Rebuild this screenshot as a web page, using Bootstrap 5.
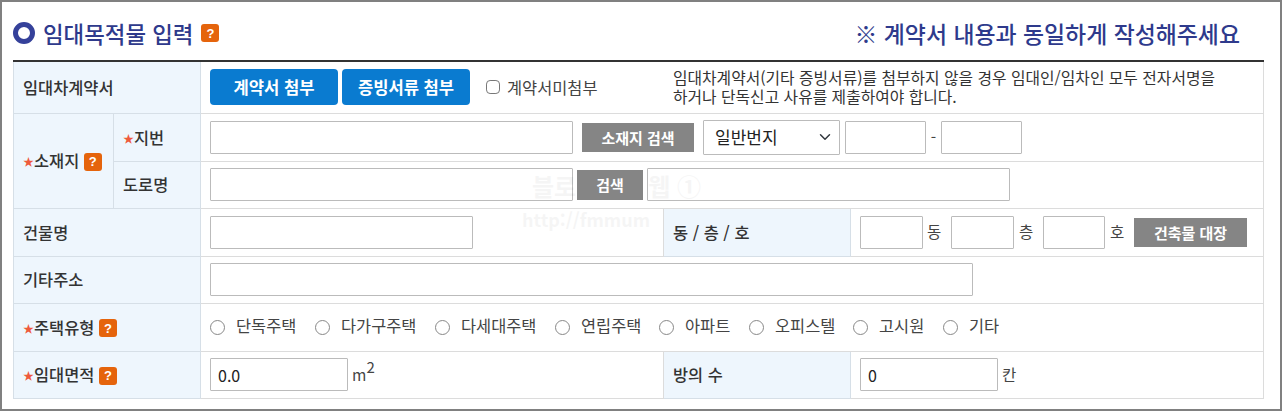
<!DOCTYPE html>
<html lang="ko"><head><meta charset="utf-8"><title>임대목적물 입력</title>
<link href="https://cdn.jsdelivr.net/npm/bootstrap@5.3.0/dist/css/bootstrap.min.css" rel="stylesheet">
<style>
html,body{height:411px;overflow:hidden;background:#fff}
body{font-family:"Noto Sans CJK KR","Noto Sans",sans-serif;font-size:16px;color:#333}
.frame{height:411px;border:2px solid #808080;padding:0 18px 0 11px;position:relative}
.head{height:58px;padding:4px 22px 0 0}
.ring{width:22px;height:22px;border:5px solid #35419a;border-radius:50%;margin-right:8px}
.title-main{font-size:22.4px;color:#2e3a8c;font-weight:500;line-height:30px}
.title-note{font-size:22.9px;color:#2e3a8c;font-weight:500;line-height:30px}
.help{display:inline-flex;align-items:center;justify-content:center;width:18px;height:18px;background:#e5640c;color:#fff;border-radius:3px;font:700 13px "Liberation Sans",sans-serif;vertical-align:1px}
.sheet{table-layout:fixed;width:1250px;margin:0;border-top:2px solid #333;border-collapse:collapse}
.sheet>tbody>tr>*{border:1px solid #dcdcdc;padding:0 9px;vertical-align:middle;box-shadow:none;background:#fff;color:#333;font-size:16px}
.sheet>tbody>tr>th{background:#eef6fd;border-color:#d6dfe7;font-weight:500;font-size:16.4px;color:#333;white-space:nowrap}
.sheet>tbody>tr>td{padding-left:9px}
.r0{height:52px}.r2{height:48px}.r3{height:47px}
.star{color:#ee5a3c;font-size:11px;vertical-align:1px}
.fld{height:33px;border:1px solid #bbb;border-radius:1px;padding:0 7px;font-size:16px;background:#fff;color:#222;outline:0;font-family:inherit;flex:none}
.w363{width:363px}.w263{width:263px}.w81{width:81px}.w63{width:63px}.w763{width:763px}.w138{width:138px}
.pick{width:137px;height:35px;padding:0 8px 0 11px;border:1px solid #bbb;border-radius:1px;font-size:17px;color:#222;background-position:right 6px center;flex:none;font-family:inherit}
.btn-blue{height:36px;background:#0a7bd0;border:0;border-radius:4px;color:#fff;font-weight:700;font-size:16.6px;padding:0;flex:none;line-height:1;white-space:nowrap}
.btn-blue:hover{background:#0a7bd0;color:#fff}
.btn-grey{height:29px;background:#858585;border:0;border-radius:0;color:#fff;font-weight:700;font-size:15px;padding:0;flex:none;line-height:1;white-space:nowrap}
.btn-grey:hover{background:#858585;color:#fff}
.tick{width:14px;height:14px;margin:0 7px 0 0;border:1px solid #777;border-radius:2px;flex:none}
.rad{width:15px;height:15px;margin:0;border:1px solid #888;flex:none;margin-top:2px}
.opt{display:flex;align-items:center;color:#444;font-size:16.4px;flex:none;white-space:nowrap}
.opt span{margin-left:11px;margin-top:-4px}
.explain{font-size:15.8px;line-height:19px;color:#333;margin:-1px 0 0 0;white-space:nowrap}
.unit{font-size:15.5px;color:#444}
.mark-water{position:absolute;left:520px;top:170px;color:#000;opacity:.035;font-weight:700;pointer-events:none;line-height:1.2;white-space:nowrap}
.water-top{font-size:24px;padding-left:10px}
.water-top span+span{margin-left:72px}
.water-low{font-size:18px;margin-top:8px}
sup{font-size:15px;top:-.5em}
</style></head><body>
<div class="frame">
<div class="head d-flex align-items-center justify-content-between">
  <div class="d-flex align-items-center"><span class="ring"></span><span class="title-main">임대목적물 입력</span><span class="help ms-2">?</span></div>
  <div class="title-note">※ 계약서 내용과 동일하게 작성해주세요</div>
</div>
<table class="table sheet">
<colgroup><col style="width:100px"><col style="width:87px"><col style="width:463px"><col style="width:187px"><col style="width:413px"></colgroup>
<tbody>
<tr class="r0"><th colspan="2">임대차계약서</th>
<td colspan="3"><div class="d-flex align-items-center">
  <button class="btn btn-blue me-1" type="button" style="width:128px">계약서 첨부</button>
  <button class="btn btn-blue" type="button" style="width:128px">증빙서류 첨부</button>
  <label class="d-flex align-items-center ms-3 opt" style="width:187px"><input class="form-check-input tick" type="checkbox">계약서미첨부</label>
  <p class="explain">임대차계약서(기타 증빙서류)를 첨부하지 않을 경우 임대인/임차인 모두 전자서명을<br>하거나 단독신고 사유를 제출하여야 합니다.</p>
</div></td></tr>
<tr class="r2"><th rowspan="2"><span class="star">★</span>소재지 <span class="help">?</span></th><th><span class="star">★</span>지번</th>
<td colspan="3"><div class="d-flex align-items-center">
  <input class="fld w363" type="text"><button class="btn btn-grey" type="button" style="width:112px;margin-left:9px">소재지 검색</button>
  <select class="form-select pick" style="margin-left:9px"><option>일반번지</option></select>
  <input class="fld w81" style="margin-left:5px" type="text"><span class="unit text-center" style="width:15px">-</span><input class="fld w81" type="text">
</div></td></tr>
<tr class="r3"><th>도로명</th>
<td colspan="3"><div class="d-flex align-items-center">
  <input class="fld w363" type="text"><button class="btn btn-grey" type="button" style="width:66px;margin-left:4px;height:30px">검색</button><input class="fld w363" style="margin-left:4px" type="text">
</div></td></tr>
<tr class="r2"><th colspan="2">건물명</th>
<td><input class="fld w263" type="text"></td>
<th>동 / 층 / 호</th>
<td><div class="d-flex align-items-center">
  <input class="fld w63" type="text"><span class="unit" style="width:28px;padding-left:4px">동</span><input class="fld w63" type="text"><span class="unit" style="width:29px;padding-left:5px">층</span><input class="fld" style="width:62px" type="text"><span class="unit" style="width:29px;padding-left:5px">호</span><button class="btn btn-grey" type="button" style="width:113px">건축물 대장</button>
</div></td></tr>
<tr class="r3"><th colspan="2">기타주소</th><td colspan="3"><input class="fld w763" type="text"></td></tr>
<tr class="r2"><th colspan="2"><span class="star">★</span>주택유형 <span class="help">?</span></th>
<td colspan="3"><div class="d-flex align-items-center">
  <label class="opt" style="width:105px"><input class="form-check-input rad" type="radio" name="house"><span>단독주택</span></label>
  <label class="opt" style="width:120px"><input class="form-check-input rad" type="radio" name="house"><span>다가구주택</span></label>
  <label class="opt" style="width:120px"><input class="form-check-input rad" type="radio" name="house"><span>다세대주택</span></label>
  <label class="opt" style="width:104px"><input class="form-check-input rad" type="radio" name="house"><span>연립주택</span></label>
  <label class="opt" style="width:90px"><input class="form-check-input rad" type="radio" name="house"><span>아파트</span></label>
  <label class="opt" style="width:104px"><input class="form-check-input rad" type="radio" name="house"><span>오피스텔</span></label>
  <label class="opt" style="width:90px"><input class="form-check-input rad" type="radio" name="house"><span>고시원</span></label>
  <label class="opt"><input class="form-check-input rad" type="radio" name="house"><span>기타</span></label>
</div></td></tr>
<tr class="r3"><th colspan="2"><span class="star">★</span>임대면적 <span class="help">?</span></th>
<td><div class="d-flex align-items-center"><input class="fld w138" type="text" value="0.0"><span class="unit ms-1">m<sup>2</sup></span></div></td>
<th>방의 수</th>
<td><div class="d-flex align-items-center"><input class="fld w138" type="text" value="0"><span class="unit ms-1">칸</span></div></td></tr>
</tbody></table>
<div class="mark-water"><div class="water-top"><span>블로</span><span>웹 ①</span></div><div class="water-low">http://fmmum</div></div>
</div>
<script src="https://cdn.jsdelivr.net/npm/bootstrap@5.3.0/dist/js/bootstrap.bundle.min.js"></script>
</body></html>
